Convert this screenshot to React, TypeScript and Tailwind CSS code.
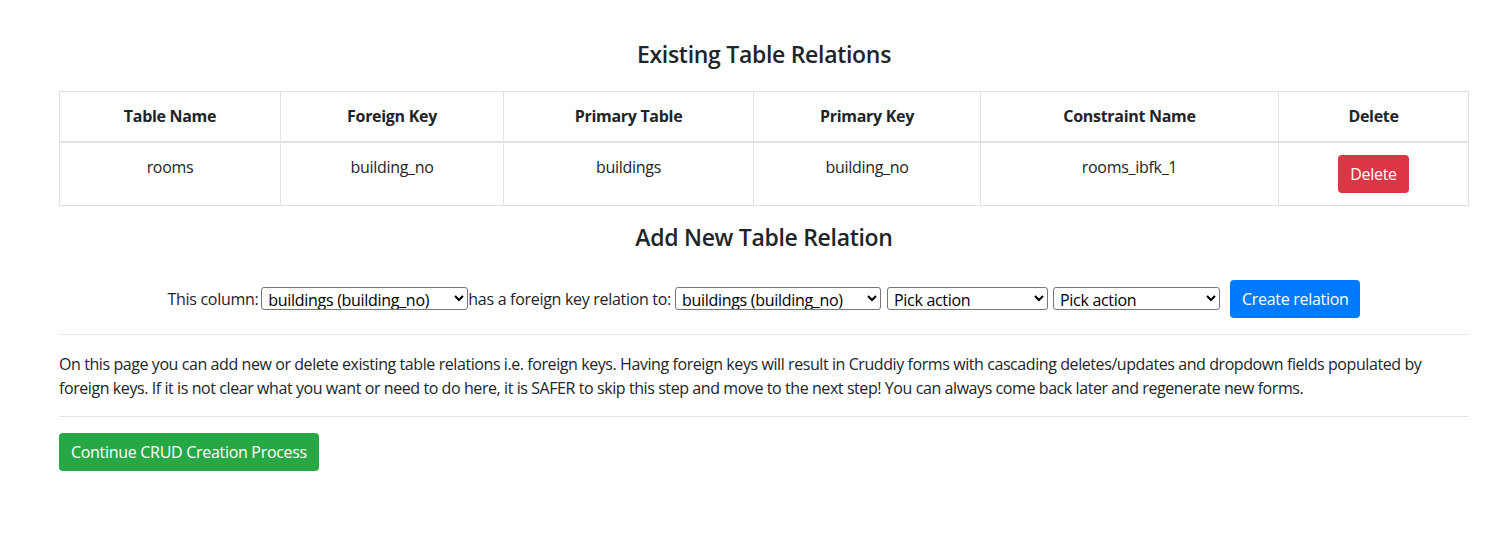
import React from 'react';

const font = { fontFamily: '"Open Sans", "Noto Sans", Arial, sans-serif' };

const cols = [
  { label: 'Table Name', w: 'w-[221px]', value: 'rooms' },
  { label: 'Foreign Key', w: 'w-[223px]', value: 'building_no' },
  { label: 'Primary Table', w: 'w-[250px]', value: 'buildings' },
  { label: 'Primary Key', w: 'w-[227px]', value: 'building_no' },
  { label: 'Constraint Name', w: 'w-[298px]', value: 'rooms_ibfk_1' },
];

function Select({ w, value }: { w: string; value: string }) {
  return (
    <select
      defaultValue={value}
      className={`${w} h-[23px] border border-[#767676] rounded-[3px] bg-white text-black text-[16px] leading-none pl-[2px]`}
    >
      <option>{value}</option>
    </select>
  );
}

export default function App() {
  return (
    <div className="min-h-screen bg-white text-[#212529] text-[16px] leading-6 tracking-[-0.3px]" style={font}>
      <div className="w-[1410px] ml-[59px] pt-[37px]">
        <h3 className="text-center text-[23px] leading-[34px] font-semibold mb-[20px]">Existing Table Relations</h3>

        <table className="w-full border-collapse border border-[#dee2e6] table-fixed">
          <thead>
            <tr>
              {cols.map((c) => (
                <th key={c.label} className={`${c.w} border border-[#dee2e6] border-b-2 px-3 py-3 font-bold text-center h-[50px]`}>
                  {c.label}
                </th>
              ))}
              <th className="border border-[#dee2e6] border-b-2 px-3 py-3 font-bold text-center">Delete</th>
            </tr>
          </thead>
          <tbody>
            <tr>
              {cols.map((c) => (
                <td key={c.label} className="border border-[#dee2e6] px-3 py-3 align-top text-center h-[63px]">
                  {c.value}
                </td>
              ))}
              <td className="border border-[#dee2e6] px-3 py-3 align-top text-center">
                <button className="bg-[#dc3545] text-white rounded px-3 h-[38px] leading-[38px]">Delete</button>
              </td>
            </tr>
          </tbody>
        </table>

        <h3 className="text-center text-[23px] leading-[34px] font-semibold mt-[14px]">Add New Table Relation</h3>

        <div className="flex items-center justify-center mt-[26px] h-[38px]">
          <span className="mr-[3px]">This column:</span>
          <Select w="w-[207px]" value="buildings (building_no)" />
          <span className="mr-[4px]">has a foreign key relation to:</span>
          <Select w="w-[206px]" value="buildings (building_no)" />
          <span className="w-[6px]" />
          <Select w="w-[161px]" value="Pick action" />
          <span className="w-[5px]" />
          <Select w="w-[167px]" value="Pick action" />
          <button className="ml-[10px] bg-[#007bff] text-white rounded px-3 h-[38px]">Create relation</button>
        </div>

        <hr className="mt-[16px] border-t border-[rgba(0,0,0,0.1)]" />

        <p className="mt-[17px] leading-[24px] tracking-[-0.42px]">
          On this page you can add new or delete existing table relations i.e. foreign keys. Having foreign keys will result in Cruddiy forms with cascading deletes/updates and dropdown fields populated by foreign keys. If it is not clear what you want or need to do here, it is SAFER to skip this step and move to the next step! You can always come back later and regenerate new forms.
        </p>

        <hr className="mt-[16px] border-t border-[rgba(0,0,0,0.1)]" />

        <button className="mt-[16px] bg-[#28a745] text-white rounded px-3 h-[38px]">Continue CRUD Creation Process</button>
      </div>
    </div>
  );
}
